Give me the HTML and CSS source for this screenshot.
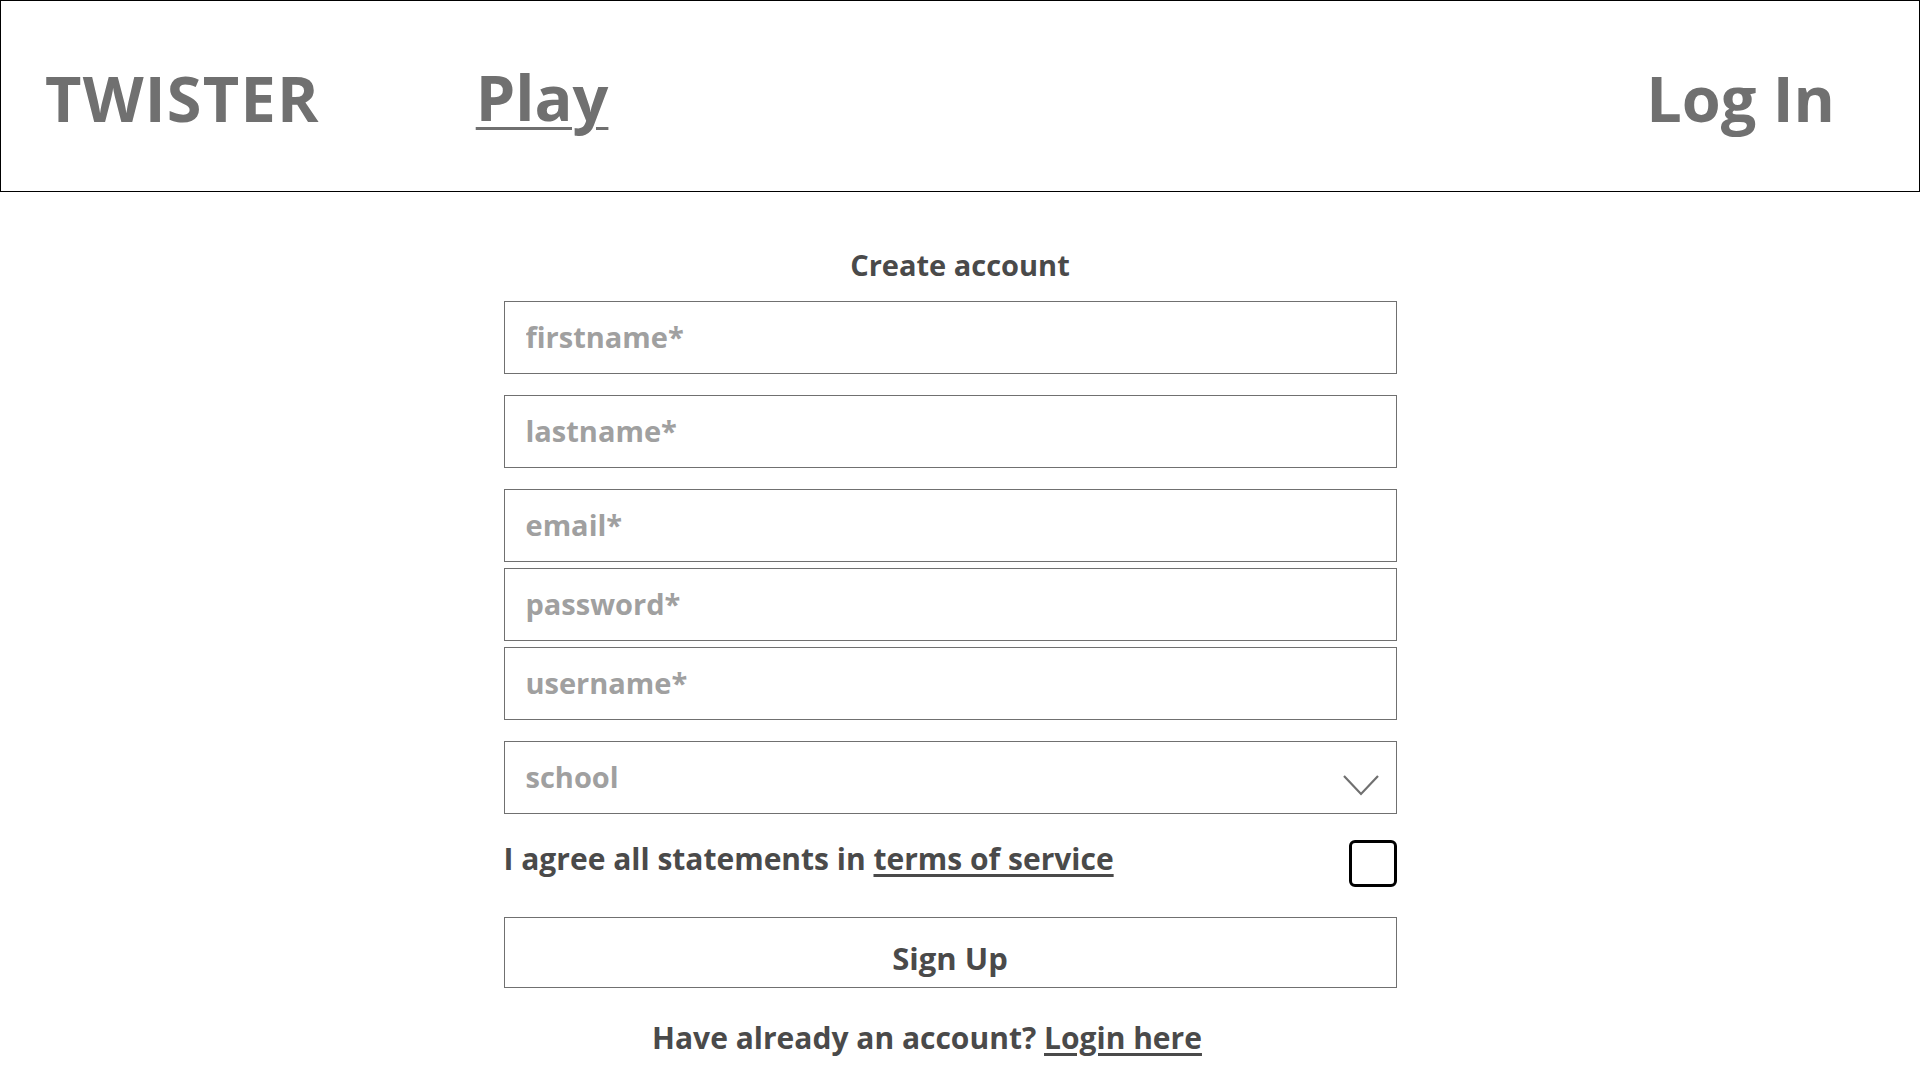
FILE: index.html
```html
<!DOCTYPE html>
<html lang="en">
<head>
<meta charset="utf-8">
<title>Twister - Create account</title>
<link rel="stylesheet" href="styles.css">
</head>
<body>
<header class="topbar">
  <a class="brand" href="#">TWISTER</a>
  <nav class="nav">
    <a class="nav-link active" href="#">Play</a>
  </nav>
  <a class="login-link" href="#">Log In</a>
</header>
<main class="page">
  <h1 class="title">Create account</h1>
  <form class="form">
    <div class="group">
      <input class="field" type="text" placeholder="firstname*">
    </div>
    <div class="group">
      <input class="field" type="text" placeholder="lastname*">
    </div>
    <div class="group tight">
      <input class="field" type="email" placeholder="email*">
      <input class="field" type="password" placeholder="password*">
      <input class="field" type="text" placeholder="username*">
    </div>
    <div class="group">
      <div class="select">
        <span class="select-text">school</span>
        <svg class="chevron" width="38" height="22" viewBox="0 0 38 22"><polyline points="2,2 19,20 36,2" fill="none" stroke="#707070" stroke-width="2.2"/></svg>
      </div>
    </div>
    <div class="agree">
      <span class="agree-text">I agree all statements in <a href="#">terms of service</a></span>
      <span class="checkbox"></span>
    </div>
    <button class="submit" type="button">Sign Up</button>
  </form>
  <p class="footer-line">Have already an account? <a href="#">Login here</a></p>
</main>
</body>
</html>
```

FILE: styles.css
```css
* { box-sizing: border-box; }
html, body { margin: 0; padding: 0; background: #fff; }
body {
  font-family: "Open Sans", "Noto Sans", "Liberation Sans", sans-serif;
  font-weight: 700;
  color: #4a4a4a;
}
.topbar {
  height: 192px;
  border: 1px solid #000;
  display: flex;
  align-items: center;
  padding: 0 84px 0 44px;
}
.brand, .nav-link, .login-link {
  font-size: 63px;
  color: #707070;
  text-decoration: none;
  line-height: 1;
  padding-top: 2px;
}
.brand { letter-spacing: 1.2px; }
.nav { margin-left: 156px; flex: 1; }
.nav-link.active { text-decoration: underline; text-decoration-thickness: 3px; text-underline-offset: 6px; }
.page {
  display: flex;
  flex-direction: column;
  align-items: center;
}
.title {
  font-size: 29px;
  font-weight: 700;
  margin: 53px 0 16px;
  line-height: 40px;
  color: #4a4a4a;
}
.form {
  width: 893px;
  margin-left: -20px;
  display: flex;
  flex-direction: column;
  gap: 21px;
}
.group { display: flex; flex-direction: column; }
.group.tight { gap: 6px; }
.field, .select {
  height: 73px;
  width: 100%;
  border: 1px solid #707070;
  padding: 0 21px 3px;
  font-family: inherit;
  font-weight: 700;
  font-size: 29px;
  color: #4a4a4a;
  background: #fff;
  outline: none;
}
.field::placeholder { color: #a0a0a0; opacity: 1; }
.select {
  display: flex;
  align-items: center;
  justify-content: space-between;
  padding-right: 16px;
}
.select-text { color: #a0a0a0; }
.chevron { margin-top: 18px; }
.agree {
  display: flex;
  justify-content: space-between;
  align-items: flex-start;
  margin-top: 4px;
}
.agree-text { font-size: 30px; line-height: 40px; }
.agree-text a, .footer-line a { color: #4a4a4a; text-decoration: underline; text-underline-offset: 4px; }
.checkbox {
  width: 48px;
  height: 47px;
  border: 3px solid #000;
  border-radius: 6px;
  margin-top: 1px;
}
.submit {
  height: 71px;
  border: 1px solid #707070;
  background: #fff;
  font-family: inherit;
  font-weight: 700;
  font-size: 31px;
  color: #4a4a4a;
  margin-top: 9px;
  padding: 10px 0 0;
}
.footer-line {
  font-size: 30px;
  margin: 30px 0 0 -66px;
  line-height: 40px;
}
```
